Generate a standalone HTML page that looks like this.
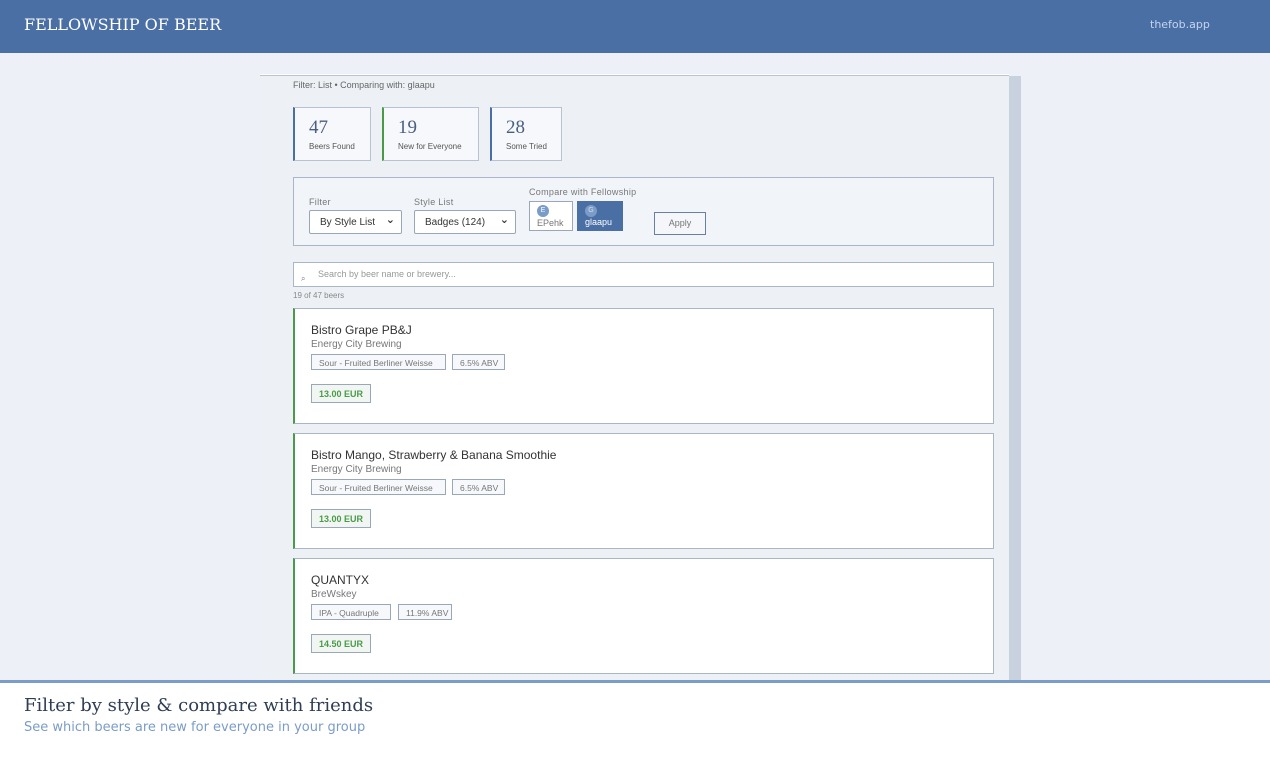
<!DOCTYPE html>
<html><head><meta charset="utf-8"><style>
*{margin:0;padding:0;box-sizing:border-box}
body{width:1270px;height:760px;overflow:hidden;background:#edf0f7;font-family:"Liberation Sans","DejaVu Sans",sans-serif;position:relative}
.hdr{position:absolute;left:0;top:0;width:1270px;height:53px;background:#4a6fa5}
.hdr .t{position:absolute;left:24px;top:15px;color:#fff;font-family:"DejaVu Serif",serif;font-size:16px}
.hdr .r{position:absolute;left:1150px;top:18px;color:#c4d4ee;font-family:"DejaVu Sans",sans-serif;font-size:11px}
.shot{position:absolute;left:260px;top:74px;width:749px;height:607px;background:#edf1f6;border-top:1px solid #fff;overflow:hidden}
.shot:before{content:"";position:absolute;left:0;top:0;width:749px;height:1px;background:#b9c5d3}
.sb{position:absolute;left:1009px;top:76px;width:12px;height:605px;background:#c8d2de}
.a{position:absolute}
.s{font-size:9px;color:#666}
.stat{position:absolute;top:32px;height:54px;background:#f6f8fb;border:1px solid #b8c3d1;border-left:2px solid #4a6fa5}
.stat b{position:absolute;left:14px;top:9px;font-family:"Liberation Serif",serif;font-weight:normal;font-size:19px;color:#4a5f80}
.stat i{position:absolute;left:14px;top:34px;font-style:normal;font-size:8px;color:#555}
.fbox{position:absolute;left:33px;top:102px;width:701px;height:69px;border:1px solid #a8b6c8;background:#f1f4f8}
.lbl{position:absolute;font-size:9px;color:#777;letter-spacing:.3px}
.sel{position:absolute;height:24px;background:#fff;border:1px solid #9aa7b8;border-radius:2px;font-size:10px;color:#333;padding:6px 0 0 10px}
.sel:after{content:"⌄";position:absolute;right:6px;top:2px;font-size:11px;font-weight:bold}
.card{position:absolute;left:33px;width:701px;height:116px;background:#fff;border:1px solid #a8b6c8;border-left:2px solid #4a9a4a}
.card .n{position:absolute;left:16px;top:14px;font-size:12px;color:#333}
.card .br{position:absolute;left:16px;top:30px;font-size:10px;color:#777}
.tag{position:absolute;top:45px;height:16px;border:1px solid #9aa7b8;background:#f6f8fb;font-size:8.5px;color:#777;padding:3px 7px 0;white-space:nowrap}
.pr{position:absolute;left:16px;top:75px;height:19px;border:1px solid #9aa7b8;background:#f2f6f2;font-size:9px;font-weight:bold;color:#4a9a4a;padding:4px 7px 0}
.foot{position:absolute;left:0;top:680px;width:1270px;height:80px;background:#fff;border-top:3px solid #7a9cc8}
.foot .h{position:absolute;left:24px;top:12px;font-family:"DejaVu Serif",serif;font-size:18px;color:#2f3e52}
.foot .p{position:absolute;left:24px;top:37px;font-family:"DejaVu Sans",sans-serif;font-size:13px;color:#7a9cc8}
</style></head><body>
<div class="hdr"><div class="t">FELLOWSHIP OF BEER</div><div class="r">thefob.app</div></div>
<div class="shot">
 <div class="a s" style="left:33px;top:5px">Filter: List • Comparing with: glaapu</div>
 <div class="stat" style="left:33px;width:78px"><b>47</b><i>Beers Found</i></div>
 <div class="stat" style="left:122px;width:97px;border-left-color:#4a9a4a"><b>19</b><i>New for Everyone</i></div>
 <div class="stat" style="left:230px;width:72px"><b>28</b><i>Some Tried</i></div>
 <div class="fbox">
  <div class="lbl" style="left:15px;top:19px">Filter</div>
  <div class="sel" style="left:15px;top:32px;width:93px">By Style List</div>
  <div class="lbl" style="left:120px;top:19px">Style List</div>
  <div class="sel" style="left:120px;top:32px;width:102px">Badges (124)</div>
  <div class="lbl" style="left:235px;top:9px">Compare with Fellowship</div>
  <div class="a" style="left:235px;top:23px;width:44px;height:30px;border:1px solid #9aa7b8;background:#fff">
   <div class="a" style="left:7px;top:3px;width:12px;height:12px;border-radius:6px;background:#7a9cc8;color:#fff;font-size:7px;text-align:center;line-height:12px">E</div>
   <div class="a" style="left:7px;top:16px;font-size:9px;color:#777">EPehk</div></div>
  <div class="a" style="left:283px;top:23px;width:46px;height:30px;background:#4a6fa5">
   <div class="a" style="left:8px;top:4px;width:12px;height:12px;border-radius:6px;background:#7a9cc8;color:#dde;font-size:7px;text-align:center;line-height:12px">G</div>
   <div class="a" style="left:8px;top:16px;font-size:9px;color:#fff">glaapu</div></div>
  <div class="a" style="left:360px;top:34px;width:52px;height:23px;border:1px solid #6a80a0;background:#f4f6f9;font-size:9px;color:#777;text-align:center;line-height:21px">Apply</div>
 </div>
 <div class="a" style="left:33px;top:187px;width:701px;height:25px;background:#fff;border:1px solid #a8b6c8">
  <div class="a" style="left:7px;top:11px;font-size:8px;color:#777">⌕</div>
  <div class="a" style="left:24px;top:6px;font-size:9px;color:#999">Search by beer name or brewery...</div></div>
 <div class="a" style="left:33px;top:216px;font-size:8px;color:#888">19 of 47 beers</div>
 <div class="card" style="top:233px"><div class="n">Bistro Grape PB&amp;J</div><div class="br">Energy City Brewing</div><div class="tag" style="left:16px;width:135px">Sour - Fruited Berliner Weisse</div><div class="tag" style="left:157px;width:53px">6.5% ABV</div><div class="pr">13.00 EUR</div></div>
 <div class="card" style="top:358px"><div class="n">Bistro Mango, Strawberry &amp; Banana Smoothie</div><div class="br">Energy City Brewing</div><div class="tag" style="left:16px;width:135px">Sour - Fruited Berliner Weisse</div><div class="tag" style="left:157px;width:53px">6.5% ABV</div><div class="pr">13.00 EUR</div></div>
 <div class="card" style="top:483px"><div class="n">QUANTYX</div><div class="br">BreWskey</div><div class="tag" style="left:16px;width:80px">IPA - Quadruple</div><div class="tag" style="left:103px;width:54px">11.9% ABV</div><div class="pr">14.50 EUR</div></div>
</div>
<div class="sb"></div>
<div class="foot"><div class="h">Filter by style &amp; compare with friends</div><div class="p">See which beers are new for everyone in your group</div></div>
</body></html>
